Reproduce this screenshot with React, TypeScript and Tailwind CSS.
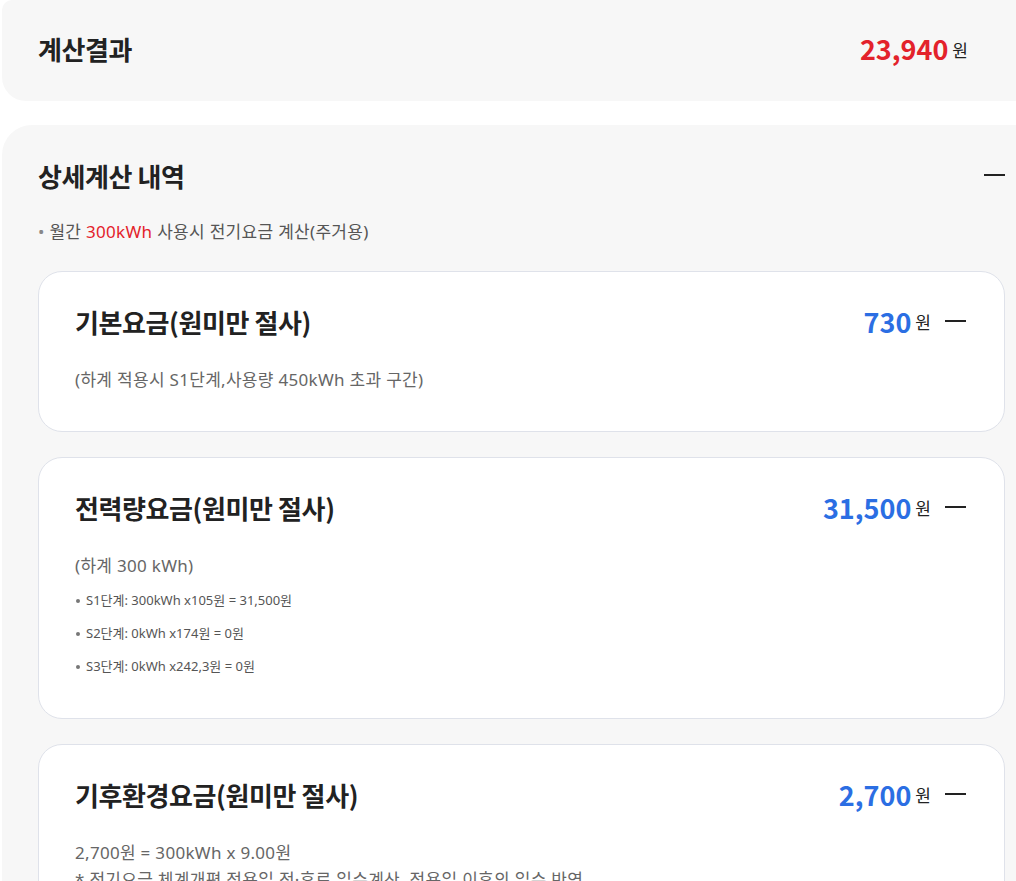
import React from 'react';

const cjk = { fontFamily: '"Noto Sans CJK KR", "Noto Sans", sans-serif' };
const body = { fontFamily: '"Noto Sans", "Noto Sans CJK KR", sans-serif' };

function Minus() {
  return <span className="block w-[21px] h-[2px] bg-[#222]" />;
}

interface FeeCardProps {
  title: string;
  amount: string;
  children: React.ReactNode;
}

function FeeCard({ title, amount, children }: FeeCardProps) {
  return (
    <div className="bg-white border border-[#dfe2ea] rounded-[24px] pl-[36px] pr-[38px] pt-[32px] pb-[39px]">
      <div className="flex items-center justify-between h-[34px]">
        <h3 className="text-[26px] font-bold text-[#222] tracking-[-0.4px]">{title}</h3>
        <div className="flex items-center">
          <span className="text-[27px] font-bold text-[#2b6ee3] leading-none">{amount}</span>
          <span className="text-[17px] text-[#222] ml-[4px] mt-[2px]">원</span>
          <span className="ml-[14px]"><Minus /></span>
        </div>
      </div>
      <div className="mt-[30px]" style={body}>{children}</div>
    </div>
  );
}

export default function App() {
  return (
    <div className="w-[1016px] h-[881px] overflow-hidden bg-white text-[#222]" style={cjk}>
      {/* 계산결과 */}
      <div className="ml-[2px] w-[1039px] h-[101px] bg-[#f7f7f7] rounded-b-[24px] rounded-t-[10px] flex items-center justify-between pl-[36px] pr-[73px] pb-[4px]">
        <h2 className="text-[26px] font-bold tracking-[-0.4px]">계산결과</h2>
        <div className="flex items-center">
          <span className="text-[27px] font-bold text-[#e3222b] leading-none">23,940</span>
          <span className="text-[17px] ml-[4px] mt-[2px]">원</span>
        </div>
      </div>

      {/* 상세계산 내역 */}
      <div className="ml-[2px] mt-[24px] w-[1039px] bg-[#f7f7f7] rounded-tl-[30px] px-[36px] pt-[32px] pb-[40px]">
        <div className="flex items-center justify-between h-[36px]">
          <h2 className="text-[26px] font-bold tracking-[-0.4px]">상세계산 내역</h2>
          <Minus />
        </div>
        <p className="mt-[27px] text-[17px] tracking-[0.3px] text-[#555] h-[24px] leading-[24px]" style={body}>
          <span className="text-[#888]">•</span> 월간 <span className="text-[#e3222b]">300kWh</span> 사용시 전기요금 계산(주거용)
        </p>

        <div className="mt-[27px] flex flex-col gap-[25px]">
          <FeeCard title="기본요금(원미만 절사)" amount="730">
            <p className="text-[17px] tracking-[0.3px] text-[#666] leading-[24px]">(하계 적용시 S1단계,사용량 450kWh 초과 구간)</p>
          </FeeCard>

          <FeeCard title="전력량요금(원미만 절사)" amount="31,500">
            <p className="text-[17px] tracking-[0.3px] text-[#666] leading-[24px]">(하계 300 kWh)</p>
            <ul className="mt-[6px] -mb-[4px] flex flex-col">
              {[
                'S1단계: 300kWh x105원 = 31,500원',
                'S2단계: 0kWh x174원 = 0원',
                'S3단계: 0kWh x242,3원 = 0원',
              ].map((t) => (
                <li key={t} className="flex items-center h-[33px] text-[13px] text-[#555]">
                  <span className="w-[4px] h-[4px] rounded-full bg-[#777] ml-[1px] mr-[6px]" />
                  {t}
                </li>
              ))}
            </ul>
          </FeeCard>

          <FeeCard title="기후환경요금(원미만 절사)" amount="2,700">
            <p className="text-[17px] tracking-[0.3px] text-[#666] leading-[24px]">2,700원 = 300kWh x 9.00원</p>
            <p className="mt-[3px] text-[17px] tracking-[0.3px] text-[#666] leading-[24px]">* 전기요금 체계개편 적용일 전·후로 일수계산, 적용일 이후의 일수 반영</p>
          </FeeCard>
        </div>
      </div>
    </div>
  );
}
